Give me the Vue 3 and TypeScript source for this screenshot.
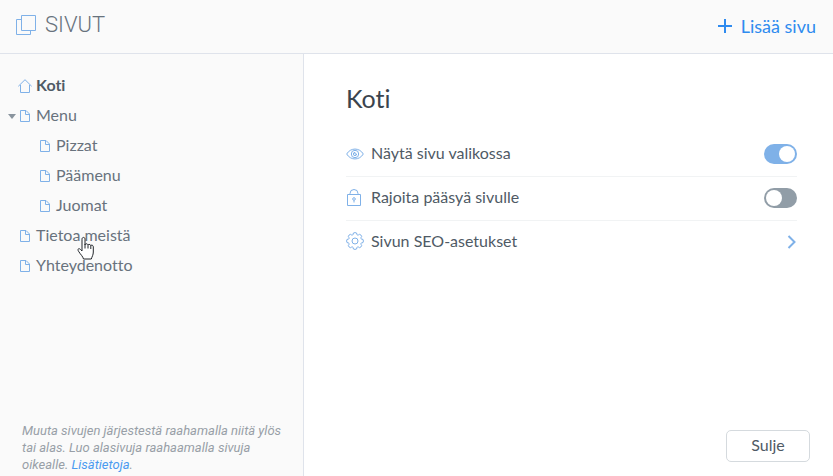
<script setup lang="ts">
import { computed, reactive, ref } from 'vue'

interface PageItem {
  id: string
  title: string
  icon: 'home' | 'page'
  children?: PageItem[]
}

const pages: PageItem[] = [
  { id: 'home', title: 'Koti', icon: 'home' },
  {
    id: 'menu',
    title: 'Menu',
    icon: 'page',
    children: [
      { id: 'pizzat', title: 'Pizzat', icon: 'page' },
      { id: 'paamenu', title: 'Päämenu', icon: 'page' },
      { id: 'juomat', title: 'Juomat', icon: 'page' },
    ],
  },
  { id: 'about', title: 'Tietoa meistä', icon: 'page' },
  { id: 'contact', title: 'Yhteydenotto', icon: 'page' },
]

const selectedId = ref('home')
const menuOpen = ref(true)
const settings = reactive({ visible: true, restricted: false })

const rows = computed(() =>
  pages.flatMap((page) => [
    { page, nested: false },
    ...(menuOpen.value ? (page.children ?? []) : []).map((child) => ({ page: child, nested: true })),
  ]),
)

const selectedTitle = computed(
  () => rows.value.find((row) => row.page.id === selectedId.value)?.page.title ?? 'Koti',
)
</script>

<template>
  <div class="manager">
    <header class="topbar">
      <h1 class="heading">
        <svg class="pages-icon" width="20" height="20" viewBox="0 0 20 20" aria-hidden="true">
          <path d="M5.500 4.500H.5v15h14v-4M5.500.5h14v15h-14z" />
        </svg>
        <span>SIVUT</span>
      </h1>
      <button class="add" type="button">
        <svg width="14" height="14" viewBox="0 0 14 14" aria-hidden="true"><path d="M7 0v14M0 7h14" /></svg>
        <span>Lisää sivu</span>
      </button>
    </header>

    <div class="body">
      <aside class="sidebar">
        <ul class="tree">
          <li v-for="row in rows" :key="row.page.id" class="row" :class="{ nested: row.nested }">
            <button
              v-if="row.page.children"
              class="caret"
              type="button"
              :aria-expanded="menuOpen"
              aria-label="Menu"
              @click="menuOpen = !menuOpen"
            >
              <svg width="8" height="5" viewBox="0 0 8 5"><path d="M0 0h8L4 5z" /></svg>
            </button>
            <button
              class="page"
              :class="{ selected: row.page.id === selectedId }"
              type="button"
              @click="selectedId = row.page.id"
            >
              <svg v-if="row.page.icon === 'home'" class="glyph" width="14" height="14" viewBox="0 0 14 14" aria-hidden="true">
                <path d="M.3 7.300 7 .7l6.700 6.600M2.500 6v7.500h9V6" />
              </svg>
              <svg v-else class="glyph" width="14" height="14" viewBox="0 0 14 14" aria-hidden="true">
                <path d="M2.500 1.500h5.500l3.500 3.500v7.500h-9zM7.500 1.500v4h4" />
              </svg>
              <span class="label">{{ row.page.title }}</span>
              <svg v-if="row.page.id === 'about'" class="pointer" width="20" height="25" viewBox="0 0 20 25" aria-hidden="true">
                <path
                  d="M6 15V3.200C6 .8 9 .8 9 3.200V9c0-1.800 3-1.600 3 .3 0-1.300 2.800-1.200 2.800.6 0-1.200 2.500-1 2.500.9v5.200c0 3-1.300 4.500-2 7H7.500c-.5-2.500-3-4.500-5-7.800-1.500-2.500.8-3.400 2.200-1.500z"
                />
                <path d="M9 8.500v4M12 9.500v3M14.800 10v3" />
              </svg>
            </button>
          </li>
        </ul>
        <p class="hint">
          Muuta sivujen järjestestä raahamalla niitä ylös<br />
          tai alas. Luo alasivuja raahaamalla sivuja<br />
          oikealle. <a href="#">Lisätietoja</a>.
        </p>
      </aside>

      <main class="detail">
        <h2 class="title">{{ selectedTitle }}</h2>
        <div class="options">
          <label class="option">
            <svg class="option-icon" width="18" height="18" viewBox="0 0 18 18" aria-hidden="true">
              <path d="M.7 9C4.500 2.400 13.500 2.400 17.300 9 13.500 15.600 4.500 15.600.7 9z" />
              <circle cx="9" cy="9" r="3.700" />
              <path d="M9 7.400A1.600 1.600 0 1 0 10.600 9H9z" />
            </svg>
            <span class="option-text">Näytä sivu valikossa</span>
            <input v-model="settings.visible" class="switch" type="checkbox" />
          </label>
          <label class="option">
            <svg class="option-icon" width="18" height="18" viewBox="0 0 18 18" aria-hidden="true">
              <path d="M1.500 5.500h13v11h-13zM4 5.500V4.500a4 4 0 0 1 8 0v1M8 11.500v2" />
              <circle cx="8" cy="10" r="1.300" />
            </svg>
            <span class="option-text">Rajoita pääsyä sivulle</span>
            <input v-model="settings.restricted" class="switch" type="checkbox" />
          </label>
          <button class="option" type="button">
            <svg class="option-icon" width="18" height="18" viewBox="0 0 18 18" aria-hidden="true">
              <path
                d="M7.400 1Q9 .2 10.600 1L10.900 2.600Q11.900 3.500 12.500 2.900L13.600 2.300Q15.200 2.800 15.700 4.400L14.900 5.800Q14.600 6.800 15.600 7.100L17 7.400Q17.800 9 17 10.600L15.400 10.900Q14.500 11.600 15.100 12.500L15.700 13.600Q15.200 15.200 13.600 15.700L12.200 14.900Q11.200 14.600 10.900 15.600L10.600 17Q9 17.800 7.400 17L7.100 15.400Q6.500 14.500 5.500 15.100L4.400 15.700Q2.800 15.200 2.300 13.600L3.100 12.200Q3.400 11.200 2.400 10.900L1 10.600Q.2 9 1 7.400L2.600 7.100Q3.500 6.500 2.900 5.500L2.300 4.400Q2.800 2.800 4.400 2.300L5.800 3.100Q6.800 3.400 7.100 2.400z"
                transform="translate(0 -1)"
              />
              <circle cx="9" cy="8" r="3" />
            </svg>
            <span class="option-text">Sivun SEO-asetukset</span>
            <svg class="chevron" width="10" height="14" viewBox="0 0 10 14" aria-hidden="true"><path d="m1.500 1 6 6-6 6" /></svg>
          </button>
        </div>
        <button class="close" type="button"><span class="label">Sulje</span></button>
      </main>
    </div>
  </div>
</template>

<style>
body {
  margin: 0;
  background: #fff;
}
</style>

<style scoped>
.manager {
  display: flex;
  flex-direction: column;
  min-height: 100vh;
  color: #4f5a65;
  font: 16px/20px Lato, "Liberation Sans", sans-serif;
  font-variant-ligatures: none;
}

button {
  margin: 0;
  padding: 0;
  border: 0;
  background: none;
  color: inherit;
  font: inherit;
  font-variant-ligatures: none;
  text-align: left;
  cursor: pointer;
}

svg {
  flex: none;
  overflow: visible;
  fill: none;
  stroke: #7fb1e8;
}

.topbar {
  display: flex;
  align-items: center;
  justify-content: space-between;
  box-sizing: border-box;
  height: 54px;
  padding: 0 17px 0 16px;
  border-bottom: 1px solid #dfe3eb;
  background: #fafafa;
}

.heading {
  display: flex;
  align-items: center;
  gap: 9px;
  margin: 0;
  padding-bottom: 4px;
  color: #68727d;
  font-family: Roboto, "Liberation Sans", sans-serif;
  font-size: 22px;
  font-weight: 300;
  line-height: 24px;
}

.add {
  display: flex;
  align-items: center;
  gap: 9px;
  padding-bottom: 2px;
  color: #2f8bef;
  font-size: 18px;
}

.add svg {
  stroke: #2f8bef;
  stroke-width: 2;
}

.body {
  display: flex;
  flex: 1;
}

.sidebar {
  display: flex;
  flex-direction: column;
  justify-content: space-between;
  box-sizing: border-box;
  width: 304px;
  flex: none;
  border-right: 1px solid #dfe3eb;
  background: #fafafa;
}

.tree {
  margin: 0;
  padding: 17px 0 0;
  list-style: none;
}

.row {
  display: flex;
  align-items: center;
  height: 30px;
  padding-left: 18px;
}

.row.nested {
  padding-left: 38px;
}

.row:has(.caret) {
  padding-left: 8px;
}

.caret {
  display: flex;
  width: 10px;
}

.caret path {
  fill: #89949e;
  stroke: none;
}

.page {
  position: relative;
  display: flex;
  align-items: center;
  gap: 4px;
  color: #68727d;
}

.page.selected {
  color: #4f5a65;
  font-weight: 700;
}

.label,
.option-text {
  display: block;
  padding-bottom: 2px;
}

.pointer {
  position: absolute;
  top: 11px;
  left: 58px;
  fill: #fff;
  stroke: #22262b;
}

.hint {
  margin: 0;
  padding: 0 0 3px 22px;
  color: #989fa7;
  font-family: Roboto, "Liberation Sans", sans-serif;
  font-size: 13px;
  font-style: italic;
  line-height: 17px;
  white-space: nowrap;
}

.hint a {
  color: #4a9af0;
  text-decoration: none;
}

.detail {
  display: flex;
  flex: 1;
  flex-direction: column;
  padding: 28px 23px 14px 42px;
}

.title {
  margin: 0;
  color: #3b444d;
  font-size: 25px;
  font-weight: 400;
  line-height: 32px;
}

.options {
  margin: 18px 13px 0 0;
}

.option {
  display: flex;
  align-items: center;
  box-sizing: border-box;
  width: 100%;
  height: 44px;
  gap: 7px;
}

.option + .option {
  padding-bottom: 1px;
  border-top: 1px solid #f1f3f4;
}

.option-text {
  flex: 1;
}

.switch {
  display: flex;
  align-items: center;
  appearance: none;
  box-sizing: border-box;
  width: 33px;
  height: 20px;
  margin: 0;
  padding: 2px;
  border-radius: 10px;
  background: #919da7;
}

.switch::before {
  width: 16px;
  height: 16px;
  border-radius: 50%;
  background: #fff;
  content: "";
}

.switch:checked {
  justify-content: flex-end;
  background: #7fb1e8;
}

.chevron {
  stroke-width: 2;
}

.close {
  align-self: flex-end;
  box-sizing: border-box;
  width: 84px;
  height: 32px;
  margin-top: auto;
  border: 1px solid #d5dade;
  border-radius: 5px;
  background: #fff;
  text-align: center;
}
</style>
